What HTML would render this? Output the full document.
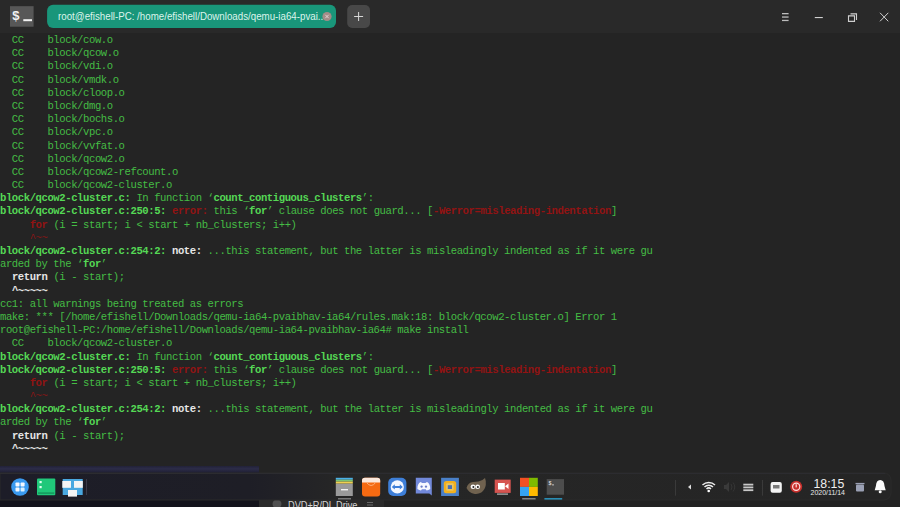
<!DOCTYPE html>
<html><head><meta charset="utf-8">
<style>
*{margin:0;padding:0;box-sizing:border-box}
html,body{width:900px;height:507px;overflow:hidden;background:#242424}
body{position:relative;font-family:"Liberation Sans",sans-serif}
#title{position:absolute;left:0;top:0;width:900px;height:33px;background:#292929}
#ticon{position:absolute;left:10px;top:6px;width:24px;height:21px;background:#555}
#tab{position:absolute;left:57.8px;top:5px;height:23px;color:#dcf4ec;font-size:10.5px;line-height:23px;white-space:nowrap;transform-origin:0 0;transform:scaleX(0.927)}
#tclose{position:absolute;left:322px;top:12px;width:9px;height:9px;border-radius:50%;background:#9c8a86}
#plus{position:absolute;left:347px;top:5px;width:23px;height:23px;background:#474747;border-radius:5px}
#term{position:absolute;left:0;top:34px;width:900px;height:430px;font-family:"Liberation Mono",monospace;font-size:10.6px;letter-spacing:-0.427px;line-height:13.19px;color:#44bd44}
#term div{height:13.19px;white-space:pre}
.b{font-weight:bold;color:#55d855}
.r{font-weight:bold;color:#921313}
.rd{color:#8a1616}
.w{font-weight:bold;color:#e6e6e6}
.ww{color:#e6e6e6}
#dock{position:absolute;left:0;top:465px;width:900px;height:42px}
#dock svg{display:block}
</style></head><body>
<div id="title">
  <svg width="900" height="33" style="position:absolute;left:0;top:0">
  <rect x="10" y="6.2" width="23.6" height="20.5" fill="#575757"/>
  <text x="12.3" y="19.8" font-family="Liberation Sans" font-weight="bold" font-size="13" fill="#f2f2f2">$</text>
  <rect x="23.3" y="19.2" width="8.7" height="2" fill="#f2f2f2"/>
  <rect x="47.1" y="4.8" width="288.9" height="23.2" rx="6" fill="#19967a"/>
  <circle cx="327" cy="16.5" r="4.6" fill="#a28c88"/>
  <path d="M325.3 14.8 l3.4 3.4 M328.7 14.8 l-3.4 3.4" stroke="#e8d8d8" stroke-width="0.9"/>
  <rect x="347.2" y="5" width="22.8" height="23" rx="5" fill="#484848"/>
  <path d="M358.6 12 v9 M354.1 16.5 h9" stroke="#d8d8d8" stroke-width="1"/>
  <g fill="#bdbdbd">
   <rect x="782" y="13" width="6.6" height="1.3"/><rect x="782" y="16.4" width="6.6" height="1.3"/><rect x="782" y="19.8" width="6.6" height="1.3"/>
  </g>
  <rect x="814.8" y="17" width="8" height="1.1" fill="#cfcfcf"/>
  <path d="M850.5 13.9 h6 v6 M848.5 15.9 h6 v5.5 h-6 z" fill="none" stroke="#cfcfcf" stroke-width="1.1"/>
  <path d="M880 12.8 l8.3 8.5 M888.3 12.8 l-8.3 8.5" stroke="#d0d0d0" stroke-width="1"/>
  </svg>
  <div id="tab">root@efishell-PC: /home/efishell/Downloads/qemu-ia64-pvai..</div>
</div>
<div id="term">
<div>  CC    block/cow.o</div>
<div>  CC    block/qcow.o</div>
<div>  CC    block/vdi.o</div>
<div>  CC    block/vmdk.o</div>
<div>  CC    block/cloop.o</div>
<div>  CC    block/dmg.o</div>
<div>  CC    block/bochs.o</div>
<div>  CC    block/vpc.o</div>
<div>  CC    block/vvfat.o</div>
<div>  CC    block/qcow2.o</div>
<div>  CC    block/qcow2-refcount.o</div>
<div>  CC    block/qcow2-cluster.o</div>
<div><span class="b">block/qcow2-cluster.c:</span> In function ‘<span class="b">count_contiguous_clusters</span>’:</div>
<div><span class="b">block/qcow2-cluster.c:250:5:</span> <span class="r">error: </span>this ‘<span class="b">for</span>’ clause does not guard... [<span class="r">-Werror=misleading-indentation</span>]</div>
<div>     <span class="r">for</span> (i = start; i &lt; start + nb_clusters; i++)</div>
<div>     <span class="rd">^~~</span></div>
<div><span class="b">block/qcow2-cluster.c:254:2:</span> <span class="w">note: </span>...this statement, but the latter is misleadingly indented as if it were gu</div>
<div>arded by the ‘<span class="b">for</span>’</div>
<div>  <span class="w">return</span> (i - start);</div>
<div>  <span class="w">^~~~~~</span></div>
<div>cc1: all warnings being treated as errors</div>
<div>make: *** [/home/efishell/Downloads/qemu-ia64-pvaibhav-ia64/rules.mak:18: block/qcow2-cluster.o] Error 1</div>
<div>root@efishell-PC:/home/efishell/Downloads/qemu-ia64-pvaibhav-ia64# make install</div>
<div>  CC    block/qcow2-cluster.o</div>
<div><span class="b">block/qcow2-cluster.c:</span> In function ‘<span class="b">count_contiguous_clusters</span>’:</div>
<div><span class="b">block/qcow2-cluster.c:250:5:</span> <span class="r">error: </span>this ‘<span class="b">for</span>’ clause does not guard... [<span class="r">-Werror=misleading-indentation</span>]</div>
<div>     <span class="r">for</span> (i = start; i &lt; start + nb_clusters; i++)</div>
<div>     <span class="rd">^~~</span></div>
<div><span class="b">block/qcow2-cluster.c:254:2:</span> <span class="w">note: </span>...this statement, but the latter is misleadingly indented as if it were gu</div>
<div>arded by the ‘<span class="b">for</span>’</div>
<div>  <span class="w">return</span> (i - start);</div>
<div>  <span class="w">^~~~~~</span></div>
</div>
<div id="dock"><svg width="900" height="42" viewBox="0 465 900 42">
<defs>
<linearGradient id="dg" x1="0" x2="1" y1="0" y2="0">
<stop offset="0" stop-color="#1d1d28"/><stop offset="0.28" stop-color="#1e1e26"/><stop offset="0.38" stop-color="#262626"/><stop offset="1" stop-color="#252525"/>
</linearGradient>
<linearGradient id="nv" x1="0" x2="0" y1="0" y2="1"><stop offset="0" stop-color="#222238"/><stop offset="0.4" stop-color="#2c2c48"/><stop offset="1" stop-color="#1e1e32"/></linearGradient>
</defs>
<rect x="0" y="466" width="259" height="41" fill="#13131b"/>
<rect x="0" y="466" width="259" height="7" fill="url(#nv)"/>
<rect x="259" y="465" width="641" height="42" fill="#242424"/>
<rect x="259" y="500" width="641" height="7" fill="#222222"/><rect x="259" y="500" width="125" height="7" fill="#2a2a2a"/>
<circle cx="277" cy="504" r="4.5" fill="#505050"/>
<text x="288" y="508.5" font-family="Liberation Sans" font-size="10.6" fill="#d4d4d4" textLength="69.5" lengthAdjust="spacingAndGlyphs">DVD+R/DL Drive</text>
<rect x="367" y="502" width="6" height="1" fill="#666"/><rect x="367" y="504.5" width="6" height="1" fill="#666"/>
<path d="M0 473 H884 a7 7 0 0 1 7 7 V493 a7 7 0 0 1 -7 7 H0 Z" fill="url(#dg)" stroke="#2b2b2b" stroke-width="1"/>
<line x1="0" y1="473.5" x2="885" y2="473.5" stroke="#2c2c30" stroke-width="1"/>
<!-- launcher -->
<circle cx="20" cy="487" r="8.8" fill="#3a9af0"/>
<rect x="15.5" y="482.5" width="4" height="4" rx="0.8" fill="#f4f8ff"/>
<rect x="20.6" y="482.5" width="4" height="4" rx="0.8" fill="#f4f8ff"/>
<rect x="15.5" y="487.6" width="4" height="4" rx="0.8" fill="#f4f8ff"/>
<rect x="20.6" y="487.6" width="4" height="4" rx="0.8" fill="#d8f0ff"/>
<!-- green terminal -->
<rect x="37" y="478.5" width="18.3" height="16.8" rx="1" fill="#20c87a"/>
<rect x="39.5" y="481" width="2.2" height="2.2" fill="#e0fff0"/>
<rect x="39.5" y="486" width="2.2" height="2.2" fill="#e0fff0"/>
<rect x="38" y="492.3" width="16.3" height="1.6" fill="#169a60"/>
<!-- multitask -->
<rect x="62.7" y="479" width="20" height="16" fill="#4aa8e0"/>
<rect x="62.3" y="481" width="8.7" height="6.8" fill="#f4f4f4"/>
<rect x="74" y="481" width="8.8" height="6.8" fill="#f4f4f4"/>
<rect x="68" y="490" width="9" height="6.6" fill="#f4f4f4"/>
<line x1="86.5" y1="479" x2="86.5" y2="495" stroke="#3a3a48" stroke-width="1"/>
<!-- archive -->
<rect x="335.8" y="483.5" width="17" height="12.5" fill="#9a9a9a"/>
<rect x="335.8" y="477.8" width="17" height="1.9" fill="#4ab0e8"/>
<rect x="335.8" y="479.7" width="17" height="1.9" fill="#7cc576"/>
<rect x="335.8" y="481.6" width="17" height="1.9" fill="#f0d050"/>
<rect x="341" y="489" width="7" height="1.4" fill="#f4f4f4"/>
<rect x="338" y="498.2" width="13" height="1.2" fill="#8a8a8a"/>
<!-- orange bag -->
<rect x="362" y="477.8" width="18.2" height="18.6" rx="3" fill="#f56a12"/>
<path d="M362 481 a3 3 0 0 1 3 -3.2 h12.2 a3 3 0 0 1 3 3.2 v1.5 h-18.2 z" fill="#fbe8dc"/>
<path d="M366.5 482.5 q4.6 6 9.2 0" fill="none" stroke="#fdb07a" stroke-width="1"/>
<!-- teamviewer -->
<rect x="388.2" y="477.8" width="18.2" height="18.2" rx="5" fill="#3e7fd8"/>
<circle cx="397.3" cy="486.9" r="6.6" fill="#f4f8ff"/>
<path d="M391.8 486.9 l3 -2.6 v1.6 h5 v-1.6 l3 2.6 l-3 2.6 v-1.6 h-5 v1.6 z" fill="#3e7fd8"/>
<!-- discord -->
<path d="M415.8 477.8 h16 v17.8 l-2.5 -2.2 h-13.5 z" fill="#7289da"/>
<path d="M417.4 489 q-0.2 -5.2 3.2 -7 l1.6 0.9 h3.2 l1.6 -0.9 q3.4 1.8 3.2 7 q-1.8 1.4 -3.6 1.6 l-0.9 -1.3 h-3.8 l-0.9 1.3 q-1.8 -0.2 -3.6 -1.6z" fill="#f6f7ff"/>
<ellipse cx="421.6" cy="486.6" rx="1.1" ry="1.2" fill="#6a7cc8"/><ellipse cx="426" cy="486.6" rx="1.1" ry="1.2" fill="#6a7cc8"/>
<!-- yellow/blue -->
<rect x="441.1" y="477.8" width="17.8" height="18.2" fill="#4a80c8"/>
<rect x="443.8" y="480.9" width="12.4" height="12.4" rx="2.5" fill="#f2b01e"/>
<rect x="446.2" y="483.3" width="7.4" height="7.4" rx="1" fill="#e9c560"/>
<rect x="447.8" y="485.2" width="4.2" height="3.8" fill="#4a6fb0"/>
<!-- gimp -->
<path d="M466.5 488 q1.5 -5.5 6.5 -6 q3 -0.3 5.5 -0.5 q4 -0.8 6.5 -3.5 q1.3 3 0.8 7 q-0.8 5 -4.5 7.5 q-3.5 2 -7.5 1.2 q-5 -1.2 -7.3 -5.7z" fill="#70624f"/>
<ellipse cx="473" cy="486.8" rx="2.4" ry="2.2" fill="#fafafa"/><ellipse cx="477.6" cy="486.8" rx="2.4" ry="2.2" fill="#fafafa"/>
<circle cx="473.4" cy="487" r="1" fill="#222"/><circle cx="477.9" cy="487" r="1" fill="#222"/>
<!-- red recorder -->
<rect x="494.7" y="479.6" width="16" height="13.3" fill="#d65450"/>
<rect x="498" y="483" width="6.8" height="6.5" fill="#fff"/>
<path d="M505 486.2 l3.5 -2.8 v5.6z" fill="#fff"/>
<rect x="497" y="493.5" width="11" height="1.2" fill="#b8b8b8"/>
<!-- ms -->
<rect x="520" y="477.8" width="9" height="9.1" fill="#f25022"/>
<rect x="529" y="477.8" width="8.8" height="9.1" fill="#7fba00"/>
<rect x="520" y="486.9" width="9" height="9.1" fill="#36a3f0"/>
<rect x="529" y="486.9" width="8.8" height="9.1" fill="#ffb900"/>
<rect x="522.2" y="498.2" width="13.4" height="1.2" fill="#9a9a9a"/>
<!-- terminal grey -->
<rect x="546.7" y="479.1" width="17.3" height="15.6" fill="#4d4d4d"/>
<text x="548.5" y="485" font-family="Liberation Mono" font-size="5" fill="#fff">$</text>
<rect x="552" y="484.5" width="2" height="0.8" fill="#ddd"/>
<rect x="544.4" y="498.2" width="17.8" height="1.3" fill="#2ca7d8"/>
<!-- tray -->
<line x1="675.5" y1="480" x2="675.5" y2="495.7" stroke="#3a3a3a" stroke-width="1"/>
<path d="M691 484.5 v5 l-3 -2.5z" fill="#ddd"/>
<g fill="none" stroke="#ececec" stroke-width="1.45">
<path d="M702.5 485 a9 9 0 0 1 12.5 0"/><path d="M704.5 487 a6 6 0 0 1 8.5 0"/><path d="M706.5 489 a3.2 3.2 0 0 1 4.5 0"/>
</g>
<circle cx="708.7" cy="491" r="1.3" fill="#fff"/>
<path d="M724 485 h2 l3 -3 v10 l-3 -3 h-2z" fill="#3a3a3a"/>
<path d="M731 484 q2 3 0 6 M733 482.5 q3.5 4.5 0 9" fill="none" stroke="#353535" stroke-width="1"/>
<rect x="743.3" y="483.7" width="10" height="1.8" fill="#c8c8c8"/>
<rect x="743.3" y="486.5" width="10" height="1.8" fill="#c8c8c8"/>
<rect x="743.3" y="489.3" width="10" height="1.8" fill="#c8c8c8"/>
<line x1="762.5" y1="480" x2="762.5" y2="495.7" stroke="#3a3a3a" stroke-width="1"/>
<rect x="770.6" y="482" width="11.2" height="10.7" rx="2" fill="#f4f4f4"/>
<rect x="773" y="485" width="6.5" height="3.5" fill="#7a7a7a"/>
<circle cx="796.2" cy="486.8" r="6" fill="#c8302c"/>
<circle cx="796.2" cy="486.8" r="3.6" fill="none" stroke="#ffdede" stroke-width="1.2"/>
<rect x="795.6" y="484.2" width="1.2" height="3.2" fill="#ffdede"/>
<text x="813.5" y="487.7" font-family="Liberation Sans" font-size="12.3" fill="#f0f0f0">18:15</text>
<text x="810.5" y="495" font-family="Liberation Sans" font-size="7" fill="#e8e8e8">2020/11/14</text>
<rect x="856" y="484.5" width="8" height="7" rx="1" fill="#9aa0b4"/>
<rect x="855.5" y="482.9" width="9" height="1.3" fill="#9aa0b4"/>
<path d="M880.2 480 q-4 0 -4.3 6 l-1.2 4.2 h11 l-1.2 -4.2 q-0.3 -6 -4.3 -6z" fill="#fafafa"/>
<circle cx="880.2" cy="491.8" r="1.5" fill="#fafafa"/>
</svg></div>
</body></html>
